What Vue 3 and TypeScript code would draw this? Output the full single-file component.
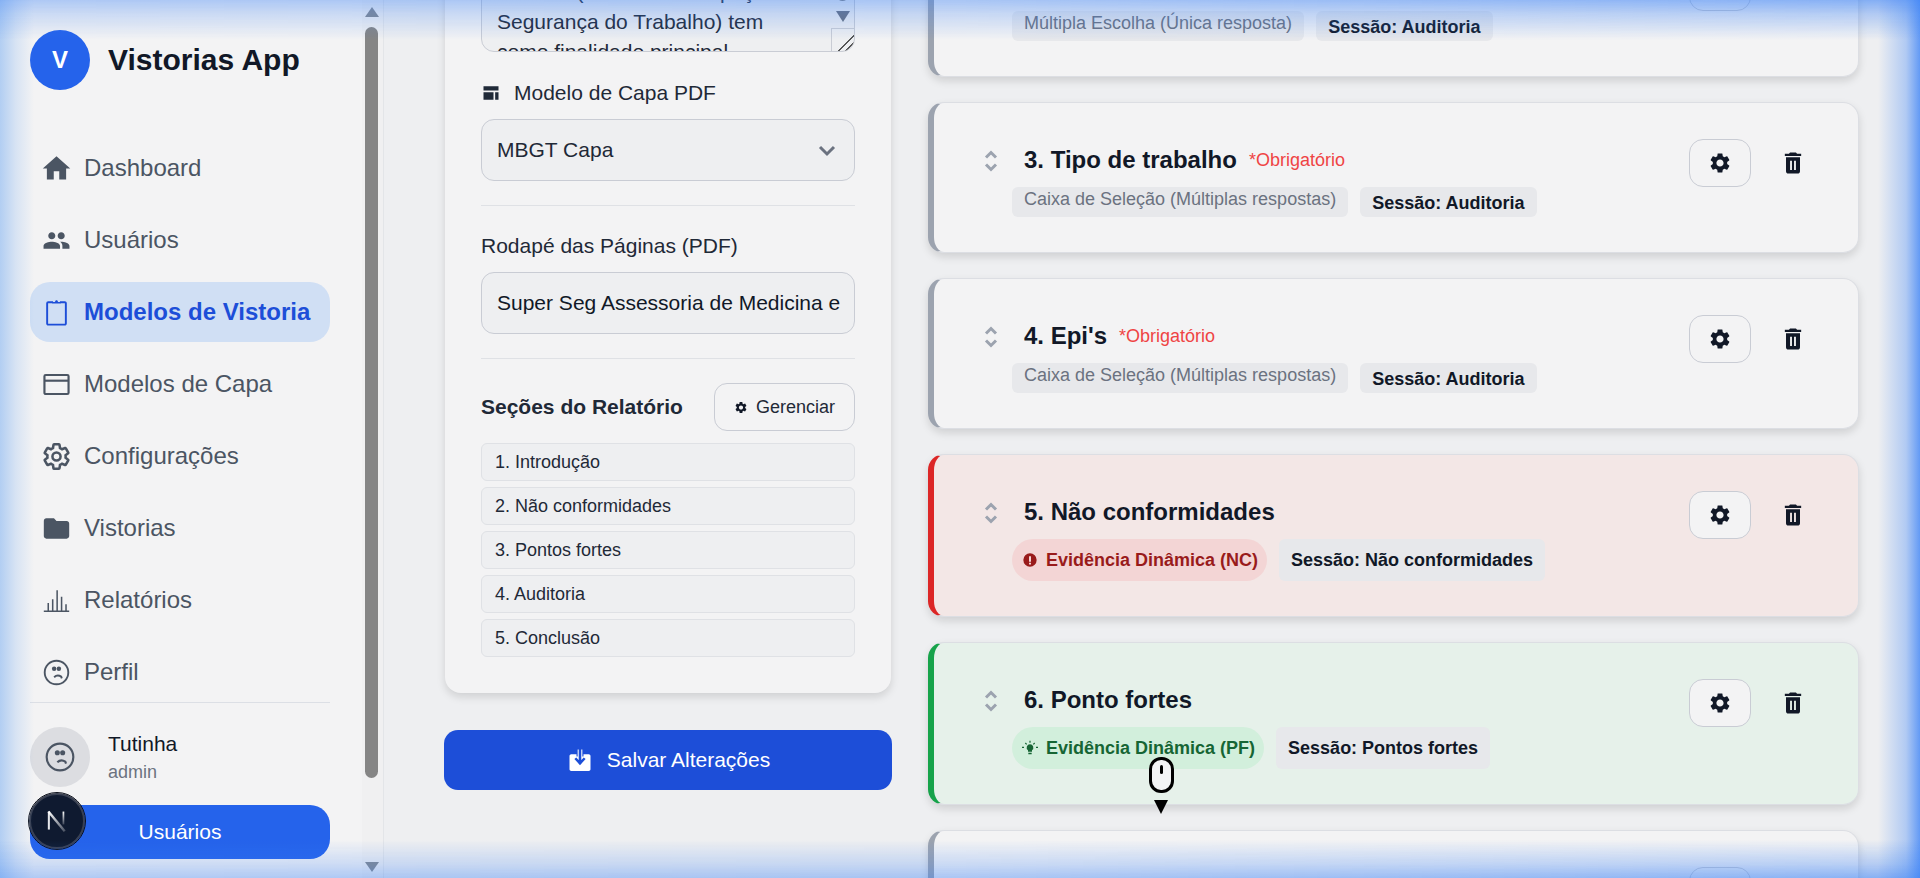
<template>
  <div class="app">
    <aside class="sidebar">
      <div class="logo">
        <div class="logo-circle">V</div>
        <span class="logo-name">Vistorias App</span>
      </div>
      <nav class="nav">
        <a v-for="item in navItems" :key="item.label" class="nav-item" :class="{ active: item.active }">
          <svg class="nav-icon" :viewBox="item.box || '0 0 24 24'" v-html="item.icon"></svg>
          <span>{{ item.label }}</span>
        </a>
      </nav>
      <div class="user">
        <div class="avatar">
          <svg viewBox="0 0 24 24" width="32" height="32" v-html="faceIcon"></svg>
        </div>
        <div class="user-info">
          <div class="user-name">Tutinha</div>
          <div class="user-role">admin</div>
        </div>
      </div>
      <button class="users-btn">Usuários</button>
      <div class="next-badge">
        <svg viewBox="0 0 56 56" width="48" height="48">
          <defs>
            <linearGradient id="nextFade" x1="0" y1="0" x2="1" y2="1">
              <stop offset="0" stop-color="#fff" />
              <stop offset="1" stop-color="#fff" stop-opacity="0.25" />
            </linearGradient>
            <linearGradient id="nextBar" x1="0" y1="0" x2="0" y2="1">
              <stop offset="0" stop-color="#fff" />
              <stop offset="1" stop-color="#fff" stop-opacity="0.2" />
            </linearGradient>
          </defs>
          <path d="M18.500 17v21" stroke="#e5e7eb" stroke-width="2.400" />
          <path d="M18 17l19 23" stroke="url(#nextFade)" stroke-width="2.800" fill="none" />
          <rect x="34.500" y="17" width="2" height="15" fill="url(#nextBar)" />
        </svg>
      </div>
      <div class="side-scroll">
        <i class="arrow-up"></i>
        <div class="thumb"></div>
        <i class="arrow-down"></i>
      </div>
    </aside>

    <main class="main">
      <section class="left-col">
        <div class="panel">
          <div class="textarea">
            <div v-for="line in descLines" :key="line" class="textarea-line">{{ line }}</div>
            <i class="ta-thumb"></i>
            <i class="ta-arrow"></i>
            <div class="ta-resize"></div>
          </div>
          <label class="field-label with-icon">
            <svg viewBox="0 0 24 24" width="20" height="20"><path d="M3 4h18v5H3zM3 11h12v9H3zM17 11h4v9h-4z" fill="#1f2937" /></svg>
            Modelo de Capa PDF
          </label>
          <div class="select">
            <span>MBGT Capa</span>
            <svg viewBox="0 0 24 24" width="24" height="24"><path d="M5 9l7 7 7-7" fill="none" stroke="#6b7280" stroke-width="3" /></svg>
          </div>
          <hr class="divider" />
          <label class="field-label">Rodapé das Páginas (PDF)</label>
          <div class="select input"><span>Super Seg Assessoria de Medicina e</span></div>
          <hr class="divider" />
          <div class="sections-head">
            <strong>Seções do Relatório</strong>
            <button class="manage-btn">
              <svg viewBox="0 0 24 24" width="19" height="19"><path :d="gearPath" fill="#111827" /></svg>
              Gerenciar
            </button>
          </div>
          <div class="section-list">
            <div v-for="s in sections" :key="s" class="section-row">{{ s }}</div>
          </div>
        </div>
        <button class="save-btn">
          <svg viewBox="0 0 24 24" width="28" height="28">
            <path d="M4.500 7H9v2h6V7h4.500c.8 0 1.500.7 1.500 1.500V20c0 .8-.7 1.500-1.500 1.500h-15C3.700 21.500 3 20.800 3 20V8.500C3 7.700 3.700 7 4.500 7z" fill="#fff" />
            <path d="M12 3v11M7.800 10.500L12 15l4.200-4.500" fill="none" stroke="#fff" stroke-width="4" />
            <path d="M12 2.500v12M8 10.500l4 4.300 4-4.300" fill="none" stroke="#1d4ed8" stroke-width="2.200" />
          </svg>
          Salvar Alterações
        </button>
      </section>

      <section class="right-col">
        <article v-for="q in questions" :key="q.id" class="q-card" :class="q.kind">
          <div class="q-body">
            <svg class="drag" viewBox="0 0 14 24" width="14" height="24">
              <path d="M2 8.500l5-5 5 5M2 15.500l5 5 5-5" fill="none" stroke="#9ca3af" stroke-width="3" />
            </svg>
            <div class="q-main">
              <div class="q-title">
                <h3>{{ q.title }}</h3>
                <span v-if="q.required" class="required">*Obrigatório</span>
              </div>
              <div class="q-tags">
                <span v-if="q.kind === 'plain'" class="tag type">{{ q.type }}</span>
                <span v-else class="pill">
                  <svg viewBox="0 0 24 24" width="16" height="16" v-html="q.kind === 'nc' ? errorIcon : bulbIcon"></svg>
                  {{ q.type }}
                </span>
                <span class="tag session" :class="{ big: q.kind !== 'plain' }">{{ q.session }}</span>
              </div>
            </div>
            <div class="q-actions">
              <button class="gear-btn">
                <svg viewBox="0 0 24 24" width="24" height="24"><path :d="gearPath" fill="#111827" /></svg>
              </button>
              <button class="trash-btn">
                <svg viewBox="0 0 24 24" width="28" height="28"><path d="M6 19c0 1.100.9 2 2 2h8c1.100 0 2-.9 2-2V7H6v12zM9.500 10h1.600v8H9.500v-8zm3.400 0h1.600v8h-1.600v-8zM19 4h-3.500l-1-1h-5l-1 1H5v2h14V4z" fill-rule="evenodd" fill="#111827" /></svg>
              </button>
            </div>
          </div>
        </article>
      </section>
    </main>

    <div class="cursor">
      <div class="mouse"><i></i></div>
      <div class="mouse-arrow"></div>
    </div>
    <div class="glow"></div>
  </div>
</template>

<script setup lang="ts">
interface NavItem {
  label: string
  icon: string
  active?: boolean
  box?: string
}

const faceIcon = `<circle cx="12" cy="12" r="10" fill="none" stroke="#4b5563" stroke-width="1.600"/><circle cx="10" cy="8.800" r="1.900" fill="#4b5563"/><circle cx="14" cy="8.800" r="1.900" fill="#4b5563"/><path d="M10 16c1.500-1.500 4-1.800 6-.5l.5 1.500" fill="none" stroke="#4b5563" stroke-width="1.600"/>`

const navItems: NavItem[] = [
  { label: 'Dashboard', icon: '<path d="M10 20v-6h4v6h5v-8h3L12 3 2 12h3v8z" fill="#4b5563"/>' },
  { label: 'Usuários', box: '-2 -2 28 28', icon: '<path d="M16 11c1.660 0 2.990-1.340 2.990-3S17.660 5 16 5s-3 1.340-3 3 1.340 3 3 3zm-8 0c1.660 0 2.990-1.340 2.990-3S9.660 5 8 5 5 6.340 5 8s1.340 3 3 3zm0 2c-2.330 0-7 1.170-7 3.500V19h14v-2.500C15 14.170 10.330 13 8 13zm8 0c-.29 0-.62.020-.97.050 1.160.84 1.970 1.970 1.970 3.450V19h6v-2.500c0-2.330-4.670-3.500-7-3.500z" fill="#4b5563"/>' },
  { label: 'Modelos de Vistoria', active: true, icon: '<path d="M9.500 4.500H6a.8.8 0 0 0-.8.8V20a.8.8 0 0 0 .8.8h12a.8.8 0 0 0 .8-.8V5.300a.8.8 0 0 0-.8-.8h-3.500" fill="none" stroke="#1d4ed8" stroke-width="1.400"/><path d="M9 4.300h1.800L11.500 3h1l.7 1.300H15v1.200H9z" fill="#1d4ed8"/>' },
  { label: 'Modelos de Capa', box: '-1 -1 26 26', icon: '<rect x="2.500" y="4.500" width="19" height="15" rx="1" fill="none" stroke="#4b5563" stroke-width="1.700"/><path d="M2.500 9h19" stroke="#4b5563" stroke-width="1.700"/>' },
  { label: 'Configurações', box: '-1 -1 26 26', icon: '<path d="M19.140 12.940c.04-.3.060-.61.060-.94 0-.32-.02-.64-.07-.94l2.030-1.580c.18-.14.230-.41.120-.61l-1.920-3.320c-.12-.22-.37-.29-.59-.22l-2.390.96c-.5-.38-1.030-.7-1.620-.94l-.36-2.540c-.04-.24-.24-.41-.48-.41h-3.840c-.24 0-.43.170-.47.410l-.36 2.540c-.59.240-1.130.570-1.620.940l-2.390-.96c-.22-.08-.47 0-.59.220L2.740 8.870c-.12.210-.08.470.120.610l2.030 1.580c-.05.300-.09.630-.09.940s.020.640.070.940l-2.030 1.580c-.18.140-.23.410-.12.610l1.920 3.320c.12.220.370.290.590.220l2.390-.96c.5.380 1.030.7 1.620.94l.36 2.540c.05.240.24.410.48.410h3.840c.24 0 .44-.17.470-.41l.36-2.540c.59-.24 1.130-.56 1.620-.94l2.390.96c.22.080.47 0 .59-.22l1.920-3.320c.12-.22.070-.47-.12-.61l-2.010-1.580z" fill="none" stroke="#4b5563" stroke-width="2"/><circle cx="12" cy="12" r="3.200" fill="none" stroke="#4b5563" stroke-width="2"/>' },
  { label: 'Vistorias', box: '-1 -1 26 26', icon: '<path d="M10 4H4c-1.100 0-1.990.9-1.990 2L2 18c0 1.100.9 2 2 2h16c1.100 0 2-.9 2-2V8c0-1.100-.9-2-2-2h-8l-2-2z" fill="#4b5563"/>' },
  { label: 'Relatórios', box: '-1 -1 26 26', icon: '<path d="M2 20.500h20M5.500 20v-6M9 20v-9M12.500 20V4M16 20V9M19.500 20v-5" fill="none" stroke="#4b5563" stroke-width="1.200"/>' },
  { label: 'Perfil', box: '-2 -2 28 28', icon: faceIcon }
]

const descLines = [
  'O laudo (Normas de Inspeção e',
  'Segurança do Trabalho) tem',
  'como finalidade principal'
]

const gearPath = 'M19.140 12.940c.04-.3.060-.61.060-.94 0-.32-.02-.64-.07-.94l2.030-1.580c.18-.14.230-.41.120-.61l-1.920-3.320c-.12-.22-.37-.29-.59-.22l-2.390.96c-.5-.38-1.030-.7-1.620-.94l-.36-2.540c-.04-.24-.24-.41-.48-.41h-3.840c-.24 0-.43.170-.47.410l-.36 2.540c-.59.240-1.130.570-1.620.940l-2.390-.96c-.22-.08-.47 0-.59.220L2.740 8.870c-.12.210-.08.470.120.610l2.030 1.580c-.05.300-.09.630-.09.940s.020.640.070.940l-2.030 1.580c-.18.140-.23.410-.12.610l1.920 3.320c.12.220.370.290.590.220l2.390-.96c.5.380 1.030.7 1.620.94l.36 2.540c.05.240.24.410.48.410h3.840c.24 0 .44-.17.470-.41l.36-2.540c.59-.24 1.130-.56 1.620-.94l2.390.96c.22.080.47 0 .59-.22l1.920-3.320c.12-.22.070-.47-.12-.61l-2.010-1.580zM12 15.600c-1.980 0-3.600-1.620-3.600-3.600s1.620-3.600 3.600-3.600 3.600 1.620 3.600 3.600-1.620 3.600-3.600 3.600z'

const errorIcon = '<path fill-rule="evenodd" d="M12 2a10 10 0 1 0 0 20 10 10 0 0 0 0-20zm-1.500 4.500h3v8h-3v-8zm0 9.500h3v2.800h-3V16z" fill="#991b1b"/>'
const bulbIcon = '<path d="M12 6.500a5 5 0 0 0-3 9v2h6v-2a5 5 0 0 0-3-9zM9.500 19h5v2.500h-5z" fill="#166534"/><path d="M12 1v3M3 11H0M24 11h-3M5 4.500l2 2M19 4.500l-2 2" stroke="#166534" stroke-width="1.800"/>'

const sections = ['1. Introdução', '2. Não conformidades', '3. Pontos fortes', '4. Auditoria', '5. Conclusão']

interface Question {
  id: number
  title: string
  type: string
  session: string
  kind: 'plain' | 'nc' | 'pf'
  required?: boolean
}

const questions: Question[] = [
  { id: 2, title: '2. Tipo de auditoria', type: 'Múltipla Escolha (Única resposta)', session: 'Sessão: Auditoria', kind: 'plain', required: true },
  { id: 3, title: '3. Tipo de trabalho', type: 'Caixa de Seleção (Múltiplas respostas)', session: 'Sessão: Auditoria', kind: 'plain', required: true },
  { id: 4, title: "4. Epi's", type: 'Caixa de Seleção (Múltiplas respostas)', session: 'Sessão: Auditoria', kind: 'plain', required: true },
  { id: 5, title: '5. Não conformidades', type: 'Evidência Dinâmica (NC)', session: 'Sessão: Não conformidades', kind: 'nc' },
  { id: 6, title: '6. Ponto fortes', type: 'Evidência Dinâmica (PF)', session: 'Sessão: Pontos fortes', kind: 'pf' },
  { id: 7, title: '7. Conclusão', type: 'Texto', session: 'Sessão: Conclusão', kind: 'plain' }
]
</script>

<style>
html, body { margin: 0; height: 100%; overflow: hidden; }
</style>

<style scoped>
.app {
  position: relative;
  display: flex;
  height: 878px;
  overflow: hidden;
  font-family: "Liberation Sans", Arial, sans-serif;
  background: #eeeff1;
  color: #111827;
}

.sidebar {
  position: relative;
  box-sizing: border-box;
  flex: 0 0 384px;
  height: 878px;
  padding: 30px 53px 0 30px;
  background: #f3f3f4;
  border-right: 1px solid #e3e5e8;
}
.logo { display: flex; align-items: center; gap: 18px; height: 60px; margin-bottom: 48px; }
.logo-circle {
  width: 60px; height: 60px; border-radius: 50%;
  background: #2563eb; color: #fff;
  display: flex; align-items: center; justify-content: center;
  font-size: 24px; font-weight: 700;
}
.logo-name { font-size: 30px; font-weight: 700; }
.nav { display: flex; flex-direction: column; gap: 12px; border-bottom: 1px solid #dcdfe5; }
.nav-item {
  display: flex; align-items: center; gap: 11px;
  height: 60px; padding-left: 10px; border-radius: 20px;
  font-size: 24px; color: #4b5563;
}
.nav-item.active { background: #d0dff4; color: #1d4ed8; font-weight: 700; }
.nav-icon { width: 33px; height: 33px; flex: none; }
.user { display: flex; align-items: center; gap: 18px; margin-top: 24px; }
.avatar {
  width: 60px; height: 60px; border-radius: 50%; background: #dcdde1;
  display: flex; align-items: center; justify-content: center;
}
.user-name { font-size: 21px; line-height: 30px; color: #111827; }
.user-role { font-size: 18px; line-height: 26px; color: #6b7280; }
.users-btn {
  display: block; width: 100%; height: 54px; margin-top: 18px;
  border: 0; border-radius: 20px; background: #2563eb; color: #fff;
  font: 21px "Liberation Sans", Arial, sans-serif;
}
.next-badge {
  position: absolute; left: 29px; top: 793px;
  box-sizing: border-box; width: 56px; height: 56px; border-radius: 50%;
  background: #0f1a30; border: 2px solid #3a4152; outline: 1px solid #0b0f1a;
  display: flex; align-items: center; justify-content: center;
}
.side-scroll { position: absolute; top: 0; right: 0; bottom: 0; width: 21px; background: #f0f0f1; }
.thumb { position: absolute; left: 3px; top: 27px; width: 13px; height: 751px; border-radius: 7px; background: #858585; }
.arrow-up, .arrow-down { position: absolute; left: 2.500px; width: 0; height: 0; border: 7.500px solid transparent; }
.arrow-up { top: 7px; border-top: 0; border-bottom: 10px solid #84898f; }
.arrow-down { bottom: 6px; border-bottom: 0; border-top: 10px solid #84898f; }

.main {
  flex: 1;
  display: grid;
  grid-template-columns: 446px 931px;
  column-gap: 37px;
  padding: 0 60px 0 61px;
  align-items: start;
}

.left-col { margin-top: -104px; }
.panel {
  box-sizing: border-box;
  padding: 36px;
  background: #f3f3f4;
  border-radius: 16px;
  box-shadow: 0 4px 8px rgba(0, 0, 0, 0.13);
  color: #1f2937;
}
.textarea {
  position: relative; box-sizing: border-box; height: 120px; overflow: hidden;
  background: #eeeff1; border: 1px solid #c9ccd4; border-radius: 13px;
  padding: 44px 15px 0;
}
.textarea-line { font-size: 21px; line-height: 30px; color: #1f2937; white-space: nowrap; }
.ta-thumb { position: absolute; right: 5px; top: 52px; width: 13px; height: 16px; border-radius: 7px; background: #858585; }
.ta-arrow {
  position: absolute; right: 4px; bottom: 29px;
  width: 0; height: 0; border: 7.500px solid transparent; border-top: 11px solid #6b7280; border-bottom: 0;
}
.ta-resize {
  position: absolute; right: 0; bottom: 0; width: 23px; height: 23px;
  box-sizing: border-box; border: 1px solid #c9ccd4; border-width: 1px 0 0 1px;
  background: linear-gradient(135deg, transparent 62%, #555 62%, #555 66%, transparent 66%, transparent 78%, #555 78%, #555 82%, transparent 82%);
}
.field-label { display: block; margin-top: 25px; font-size: 21px; line-height: 30px; color: #1f2937; }
.with-icon { display: flex; align-items: center; gap: 13px; margin-top: 26px; }
.select {
  box-sizing: border-box; height: 62px; margin-top: 11px; padding: 0 15px;
  display: flex; align-items: center; justify-content: space-between;
  background: #eeeff1; border: 1px solid #c9ccd4; border-radius: 13px;
  font-size: 21px; color: #1f2937; white-space: nowrap;
}
.select.input { color: #111827; }
.divider { border: 0; border-top: 1px solid #dfe1e5; margin: 24px 0 0; }
.sections-head { display: flex; align-items: center; justify-content: space-between; margin-top: 24px; }
.sections-head strong { font-size: 21px; color: #1f2937; }
.manage-btn {
  display: flex; align-items: center; gap: 8px;
  box-sizing: border-box; width: 141px; height: 48px; padding: 0 19px;
  background: transparent; border: 1px solid #c9ccd4; border-radius: 13px;
  font: 18px "Liberation Sans", Arial, sans-serif; color: #1f2937; white-space: nowrap;
}
.section-list { display: flex; flex-direction: column; gap: 6px; margin-top: 12px; }
.section-row {
  box-sizing: border-box; height: 38px; padding: 0 13px;
  display: flex; align-items: center;
  background: #eeeff1; border: 1px solid #dfe1e5; border-radius: 6px;
  font-size: 18px; color: #1f2937;
}
.save-btn {
  display: flex; align-items: center; justify-content: center; gap: 13px;
  width: 448px; height: 60px; margin: 37px 0 0 -1px;
  background: #1d4ed8; color: #fff; border: 0; border-radius: 14px;
  font: 21px "Liberation Sans", Arial, sans-serif;
}

.right-col { display: flex; flex-direction: column; gap: 25px; margin-top: -74px; }
.q-card {
  box-sizing: border-box;
  border: 1px solid #dcdee3;
  border-left: 6px solid #9ca3af;
  border-radius: 16px;
  background: #f3f3f4;
  box-shadow: 0 4px 8px rgba(0, 0, 0, 0.13);
  height: 151px;
  padding: 36px 0 0 0;
}
.q-card.nc { border-left-color: #dc2626; background: #f3e7e6; height: 163px; }
.q-card.pf { border-left-color: #16a34a; background: #e6f1ea; height: 163px; }
.q-body { display: flex; align-items: flex-start; }
.drag { margin: 10px 0 0 50px; flex: none; }
.q-main { flex: 1; margin-left: 14px; }
.q-title { display: flex; align-items: center; gap: 12px; margin-left: 12px; height: 42px; }
.q-title h3 { margin: 0; font-size: 24px; font-weight: 700; color: #111827; }
.required { font-size: 18px; color: #ef4444; }
.q-tags { display: flex; gap: 12px; margin-top: 6px; }
.tag { box-sizing: border-box; height: 30px; padding: 0 12px; border-radius: 6px; background: #e7e8eb; font-size: 18px; white-space: nowrap; }
.tag.type { color: #6b7280; line-height: 25px; }
.tag.session { color: #111827; font-weight: 700; line-height: 32px; }
.tag.session.big { height: 42px; line-height: 42px; }
.pill {
  box-sizing: border-box; display: flex; align-items: center; gap: 8px;
  height: 42px; padding: 0 9px 0 10px; border-radius: 21px;
  font-size: 18px; font-weight: 700; white-space: nowrap;
}
.nc .pill { background: #f3d5d5; color: #991b1b; }
.pf .pill { background: #d2efdc; color: #166534; }
.q-actions { display: flex; align-items: center; gap: 12px; padding-right: 35px; flex: none; }
.gear-btn {
  box-sizing: border-box; width: 62px; height: 48px;
  background: #f3f3f4; border: 1px solid #c9ccd4; border-radius: 14px;
  display: flex; align-items: center; justify-content: center;
}
.q-card.plain .gear-btn { background: transparent; }
.trash-btn { width: 60px; height: 48px; background: none; border: 0; padding: 0; display: flex; align-items: center; justify-content: center; }

.cursor { position: absolute; left: 1149px; top: 757px; width: 24px; display: flex; flex-direction: column; align-items: center; }
.mouse { position: relative; box-sizing: border-box; width: 25px; height: 36px; border: 3px solid #000; border-radius: 12px; background: #f3f4f5; }
.mouse i { position: absolute; left: 8.500px; top: 5px; width: 3px; height: 9px; background: #000; border-radius: 2px; }
.mouse-arrow { margin-top: 7px; width: 0; height: 0; border: 7px solid transparent; border-top: 14px solid #000; border-bottom: 0; }

.glow {
  position: absolute; inset: 0; pointer-events: none;
  background:
    linear-gradient(to right, rgba(80, 150, 240, 0.4), rgba(80, 150, 240, 0.17) 16px, rgba(80, 150, 240, 0) 34px),
    linear-gradient(to left, rgba(59, 130, 246, 0.78), rgba(59, 130, 246, 0.34) 14px, rgba(59, 130, 246, 0) 42px);
}
.glow::before, .glow::after {
  content: "";
  position: absolute; left: 0; right: 0;
  -webkit-mask-image: linear-gradient(to right, rgba(0, 0, 0, 0.62), rgba(0, 0, 0, 0.68) 50%, #000);
  mask-image: linear-gradient(to right, rgba(0, 0, 0, 0.62), rgba(0, 0, 0, 0.68) 50%, #000);
}
.glow::before {
  top: 0; height: 40px;
  background: linear-gradient(to bottom, rgba(59, 130, 246, 0.6), rgba(59, 130, 246, 0.34) 14px, rgba(59, 130, 246, 0));
}
.glow::after {
  bottom: 0; height: 38px;
  background: linear-gradient(to top, rgba(59, 130, 246, 0.58), rgba(59, 130, 246, 0.32) 14px, rgba(59, 130, 246, 0));
}
</style>
